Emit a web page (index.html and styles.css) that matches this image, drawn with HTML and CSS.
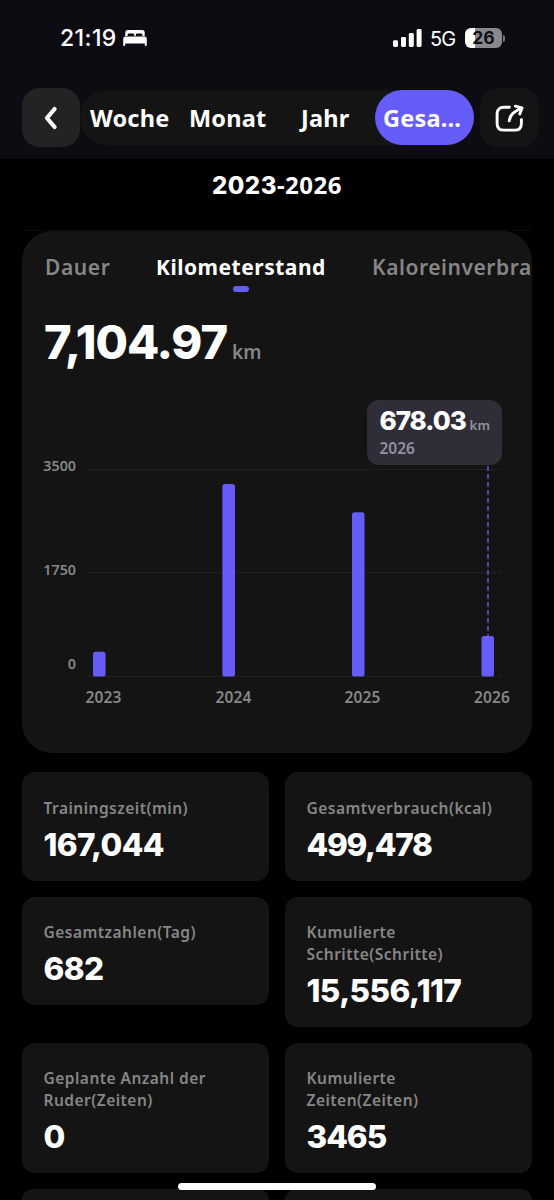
FILE: index.html
```html
<!DOCTYPE html>
<html lang="de">
<head>
<meta charset="utf-8">
<title>Statistik</title>
<link rel="stylesheet" href="styles.css">
</head>
<body>
<header class="header">
  <div class="status">
    <div class="status-left">
      <span class="clock">21:19</span>
      <svg class="bed" width="24" height="18" viewBox="0 0 24 18"><path d="M2.3 7V3.6Q2.3 1 5 1H19Q21.7 1 21.7 3.6V7H19.4V5.8Q19.4 4.4 18 4.4H14.2Q12.8 4.4 12.8 5.8V7H11.2V5.8Q11.2 4.4 9.8 4.4H6Q4.6 4.4 4.6 5.8V7Z" fill="#fff"/><path d="M.2 16.2V10Q.2 7.6 2.6 7.6H21.4Q23.8 7.6 23.8 10V16.2Q23.8 17 22.8 17Q21.8 17 21.8 16.2V14.6H2.2V16.2Q2.2 17 1.2 17Q.2 17 .2 16.2Z" fill="#fff"/></svg>
    </div>
    <div class="status-right">
      <svg width="29" height="18" viewBox="0 0 29 18" fill="#fff"><rect x="0" y="11.2" width="5" height="6.8" rx="1.4"/><rect x="8" y="8" width="5" height="10" rx="1.4"/><rect x="15.8" y="4" width="5" height="14" rx="1.4"/><rect x="23.6" y="0" width="5" height="18" rx="1.4"/></svg>
      <span class="network">5G</span>
      <span class="battery">26</span>
      <span class="battery-tip"></span>
    </div>
  </div>
  <nav class="nav">
    <button class="square back"><svg width="16" height="24" viewBox="0 0 16 24"><path d="M11.6 3 3.9 12l7.7 9" fill="none" stroke="#fff" stroke-width="4.2" stroke-linecap="round" stroke-linejoin="round"/></svg></button>
    <div class="periods">
      <span class="period week">Woche</span>
      <span class="period month">Monat</span>
      <span class="period year">Jahr</span>
      <span class="period active">Gesa...</span>
    </div>
    <button class="square share"><svg width="30" height="30" viewBox="0 0 30 30" fill="none" stroke="#fff" stroke-width="2.9" stroke-linecap="round" stroke-linejoin="round"><path d="M14.4 4.3H9Q2.1 4.3 2.1 11V20.4Q2.1 27.1 9 27.1H19.6Q26.4 27.1 26.4 20.4V16.6"/><path d="M14.2 17.8C14.8 11.5 19.5 8.6 25.8 5.2M20.4 3.2 27 4.9 24.8 11"/></svg></button>
  </nav>
</header>
<main class="content">
  <h1 class="range"><span class="range-from">2023</span>-2026</h1>
  <section class="card">
    <div class="metrics">
      <span class="metric">Dauer</span>
      <span class="metric selected">Kilometerstand</span>
      <span class="metric last">Kaloreinverbra</span>
    </div>
    <div class="total"><span class="total-value">7,104.97</span><span class="total-unit">km</span></div>
    <div class="chart">
      <svg class="plot" width="510" height="373" viewBox="0 0 510 373">
        <g stroke="#202020" stroke-width="1"><path d="M63 89.5H479M63 192.5H479M63 296.5H479"/></g>
        <g class="axis axis-y" text-anchor="end"><text x="54" y="91">3500</text><text x="54" y="195">1750</text><text x="54" y="289">0</text></g>
        <path d="M466 86V257" stroke="#6a5dfb" stroke-opacity=".8" stroke-width="1.6" stroke-dasharray="5 3"/>
        <g fill="#665cf8"><rect x="71" y="271.7" width="12.5" height="24.8" rx="2.6"/><rect x="200.4" y="104" width="12.6" height="192.5" rx="2.6"/><rect x="330" y="132.2" width="12.5" height="164.3" rx="2.6"/><rect x="459.5" y="256" width="12.5" height="40.5" rx="2.6"/></g>
        <g class="axis" text-anchor="middle"><text x="81.5" y="322.6">2023</text><text x="211.5" y="322.6">2024</text><text x="340.5" y="322.6">2025</text><text x="470" y="322.6">2026</text></g>
      </svg>
      <div class="tooltip">
        <div class="tip-row"><span class="tip-value">678.03</span><span class="tip-unit">km</span></div>
        <div class="tip-year">2026</div>
      </div>
    </div>
  </section>
  <section class="stats">
    <article class="stat"><div class="label">Trainingszeit(min)</div><div class="value">167,044</div></article>
    <article class="stat"><div class="label">Gesamtverbrauch(kcal)</div><div class="value v2">499,478</div></article>
    <article class="stat"><div class="label">Gesamtzahlen(Tag)</div><div class="value v3">682</div></article>
    <article class="stat"><div class="label">Kumulierte Schritte(Schritte)</div><div class="value v4">15,556,117</div></article>
    <article class="stat"><div class="label">Geplante Anzahl der Ruder(Zeiten)</div><div class="value">0</div></article>
    <article class="stat"><div class="label">Kumulierte Zeiten(Zeiten)</div><div class="value v6">3465</div></article>
    <article class="stat peek"></article>
    <article class="stat peek"></article>
  </section>
</main>
<div class="home-bar"></div>
</body>
</html>
```

FILE: styles.css
```css
* { box-sizing: border-box; }
html, body { margin: 0; }
body {
  width: 554px;
  height: 1200px;
  overflow: hidden;
  position: relative;
  background: #000;
  color: #fff;
  font-family: "Noto Sans", sans-serif;
}
.header { height: 159px; background: #0d0c12; }
.status {
  height: 88px;
  padding: 26px 48px 0 60px;
  display: flex;
  justify-content: space-between;
  align-items: flex-start;
  font-family: Inter, sans-serif;
}
.status-left, .status-right { display: flex; align-items: center; height: 24px; }
.clock { font-size: 23px; font-weight: 500; letter-spacing: 0.4px; width: 63px; white-space: nowrap; }
.status-right { width: 113px; }
.network { font-size: 20px; width: 27px; margin: 1px 0 0 8px; letter-spacing: -0.8px; }
.battery {
  margin-left: 8px;
  width: 37px;
  height: 20px;
  border-radius: 6px;
  background: linear-gradient(90deg, #fff 26%, #89898d 26%);
  color: #101014;
  font-size: 17.5px;
  font-weight: 700;
  line-height: 20px;
  text-align: center;
}
.battery-tip { width: 2px; height: 7px; margin-left: 1px; border-radius: 0 2px 2px 0; background: #77777b; }
.nav { display: flex; align-items: center; padding-left: 22px; height: 59px; }
.square {
  width: 58px;
  height: 59px;
  border: 0;
  padding: 0;
  border-radius: 18px;
  display: flex;
  align-items: center;
  justify-content: center;
}
.back { background: #232323; }
.share { background: #141414; margin-left: 6px; width: 59px; }
.periods {
  width: 394px;
  height: 55px;
  border-radius: 28px;
  background: #141414;
  display: flex;
  align-items: center;
}
.period { font-size: 23.5px; font-weight: 700; line-height: 56px; letter-spacing: 0.2px; white-space: nowrap; }
.week { margin-left: 10px; width: 99px; }
.month { width: 112px; }
.year { width: 74px; }
.active { width: 99px; height: 55px; border-radius: 28px; background: #665cf8; padding-left: 8px; }
.content { padding: 0 22px; }
.range { margin: 0; height: 72px; font-size: 24px; font-weight: 700; line-height: 51px; text-align: center; letter-spacing: 0.5px; border-bottom: 1px solid #0b0b0b; }
.range-from { font-family: Inter, sans-serif; font-weight: 800; font-size: 24px; letter-spacing: 0.5px; }
.card { height: 522px; border-radius: 30px; background: #141414; overflow: hidden; }
.metrics { display: flex; height: 78px; padding-left: 23px; }
.metric { font-size: 21px; font-weight: 600; line-height: 73px; color: #868686; letter-spacing: 0.6px; white-space: nowrap; width: 111px; }
.metric.selected { width: 216px; color: #fff; font-weight: 700; letter-spacing: 0.5px; }
.metric.last { width: 160px; letter-spacing: 0.55px; }
.metric.selected::after { content: ""; display: block; width: 16px; height: 6px; border-radius: 3px; background: #665cf8; margin: -18px 0 0 77px; }
.total { height: 71px; padding-left: 22px; display: flex; align-items: baseline; }
.total-value { font-family: Inter, sans-serif; font-weight: 800; font-size: 47px; line-height: 66px; letter-spacing: -1.1px; width: 188px; white-space: nowrap; }
.total-unit { font-size: 19px; font-weight: 600; color: #868686; }
.chart { position: relative; height: 373px; }
.plot { display: block; }
.axis { font-size: 15.5px; font-weight: 600; letter-spacing: 0.1px; fill: #868686; }
.axis-y { font-size: 14.3px; letter-spacing: 0; }
.tooltip {
  position: absolute;
  left: 345px;
  top: 20px;
  width: 135px;
  height: 65px;
  border-radius: 12px;
  background: #2e2d38;
  padding: 6px 0 0 12.5px;
}
.tip-row { display: flex; align-items: baseline; height: 30px; }
.tip-value { font-family: Inter, sans-serif; font-weight: 800; font-size: 26px; line-height: 30px; letter-spacing: -1px; width: 90px; }
.tip-unit { font-size: 13px; font-weight: 600; color: #9291a0; letter-spacing: 0.3px; }
.tip-year { font-size: 15.5px; font-weight: 600; line-height: 25px; color: #9291a0; }
.stats { display: grid; grid-template-columns: 247px 247px; column-gap: 16px; row-gap: 16px; align-items: start; margin-top: 19px; }
.stat { min-height: 108.5px; padding: 24.5px 21.5px 17.5px; border-radius: 13px; background: #141414; }
.stat.peek { min-height: 0; height: 11px; padding: 0; border-radius: 13px 13px 0 0; }
.label { font-size: 15.5px; font-weight: 600; line-height: 22px; color: #868686; letter-spacing: 0.48px; }
.value { font-family: Inter, sans-serif; font-weight: 800; font-size: 31.5px; line-height: 36px; margin-top: 8px; letter-spacing: -0.6px; }
.v2 { letter-spacing: -1.3px; }
.v4 { letter-spacing: -0.55px; }
.v6 { letter-spacing: -1px; }
.home-bar { position: absolute; left: 178px; top: 1183px; width: 198px; height: 7px; border-radius: 4px; background: #fff; }
```
